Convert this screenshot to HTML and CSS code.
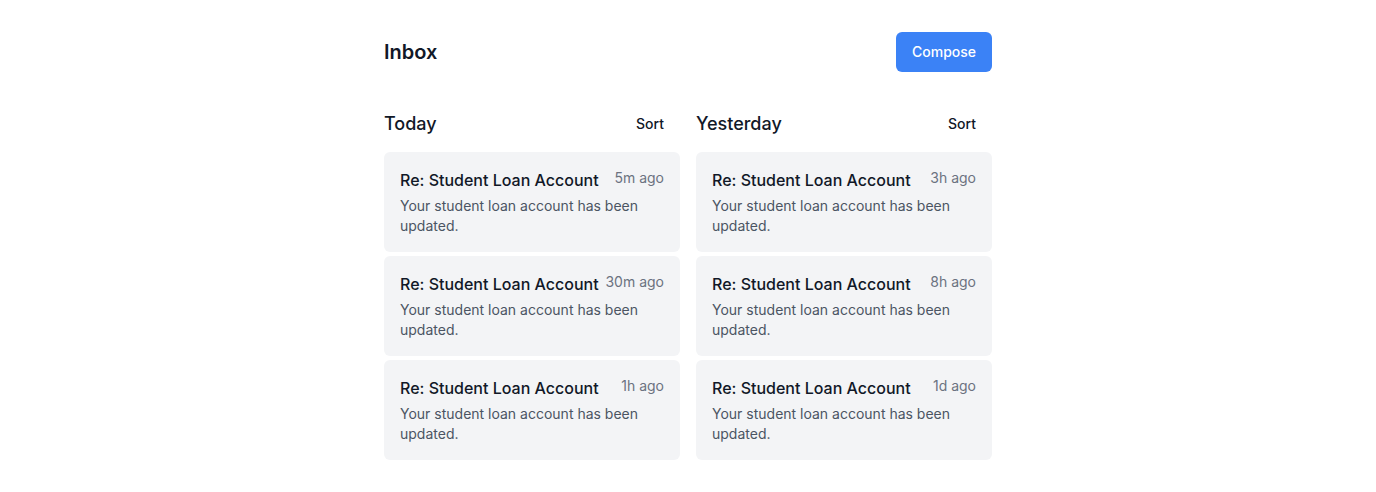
FILE: index.html
```html
<!DOCTYPE html>
<html lang="en">
<head>
<meta charset="utf-8">
<title>Inbox</title>
<link rel="stylesheet" href="styles.css">
</head>
<body>
<div class="page">
  <header class="top">
    <h1 class="title">Inbox</h1>
    <button class="compose">Compose</button>
  </header>
  <div class="columns">
    <section class="col">
      <div class="col-head">
        <h2 class="col-title">Today</h2>
        <button class="sort">Sort</button>
      </div>
      <div class="list">
        <article class="card">
          <div class="card-top"><span class="subject">Re: Student Loan Account</span><span class="time">5m ago</span></div>
          <p class="body">Your student loan account has been updated.</p>
        </article>
        <article class="card">
          <div class="card-top"><span class="subject">Re: Student Loan Account</span><span class="time">30m ago</span></div>
          <p class="body">Your student loan account has been updated.</p>
        </article>
        <article class="card">
          <div class="card-top"><span class="subject">Re: Student Loan Account</span><span class="time">1h ago</span></div>
          <p class="body">Your student loan account has been updated.</p>
        </article>
      </div>
    </section>
    <section class="col">
      <div class="col-head">
        <h2 class="col-title">Yesterday</h2>
        <button class="sort">Sort</button>
      </div>
      <div class="list">
        <article class="card">
          <div class="card-top"><span class="subject">Re: Student Loan Account</span><span class="time">3h ago</span></div>
          <p class="body">Your student loan account has been updated.</p>
        </article>
        <article class="card">
          <div class="card-top"><span class="subject">Re: Student Loan Account</span><span class="time">8h ago</span></div>
          <p class="body">Your student loan account has been updated.</p>
        </article>
        <article class="card">
          <div class="card-top"><span class="subject">Re: Student Loan Account</span><span class="time">1d ago</span></div>
          <p class="body">Your student loan account has been updated.</p>
        </article>
      </div>
    </section>
  </div>
</div>
</body>
</html>
```
FILE: styles.css
```css
* { box-sizing: border-box; }
html, body { margin: 0; padding: 0; background: #fff; }
body {
  font-family: Inter, "Noto Sans", sans-serif;
  color: #111827;
}
.page {
  width: 608px;
  margin: 0 auto;
  padding-top: 32px;
}
.top {
  display: flex;
  justify-content: space-between;
  align-items: center;
  height: 40px;
}
.title {
  margin: 0;
  font-size: 20px;
  line-height: 28px;
  font-weight: 600;
}
.compose {
  font-family: inherit;
  background: #3b82f6;
  color: #fff;
  border: 0;
  border-radius: 6px;
  font-size: 14px;
  line-height: 20px;
  font-weight: 500;
  padding: 10px 16px;
  width: 96px;
  height: 40px;
}
.columns {
  display: grid;
  grid-template-columns: minmax(0, 1fr) minmax(0, 1fr);
  gap: 16px;
  margin-top: 38px;
}
.col { min-width: 0; }
.col-head {
  display: flex;
  justify-content: space-between;
  align-items: center;
  height: 28px;
  margin-bottom: 14px;
}
.col-title {
  margin: 0;
  font-size: 18px;
  line-height: 28px;
  font-weight: 500;
}
.sort {
  font-family: inherit;
  background: none;
  border: 0;
  font-size: 14px;
  line-height: 20px;
  font-weight: 500;
  color: #111827;
  padding: 0 16px;
}
.list {
  display: flex;
  flex-direction: column;
  gap: 4px;
}
.card {
  background: #f3f4f6;
  border-radius: 6px;
  padding: 16px;
  height: 100px;
}
.card-top {
  display: flex;
  justify-content: space-between;
  align-items: flex-start;
  gap: 6px;
  margin-bottom: 4px;
}
.subject {
  font-size: 16px;
  line-height: 24px;
  font-weight: 500;
  color: #111827;
  white-space: nowrap;
}
.time {
  font-size: 14px;
  line-height: 20px;
  color: #6b7280;
  white-space: nowrap;
}
.body {
  margin: 0;
  font-size: 14px;
  line-height: 20px;
  color: #4b5563;
}
```
